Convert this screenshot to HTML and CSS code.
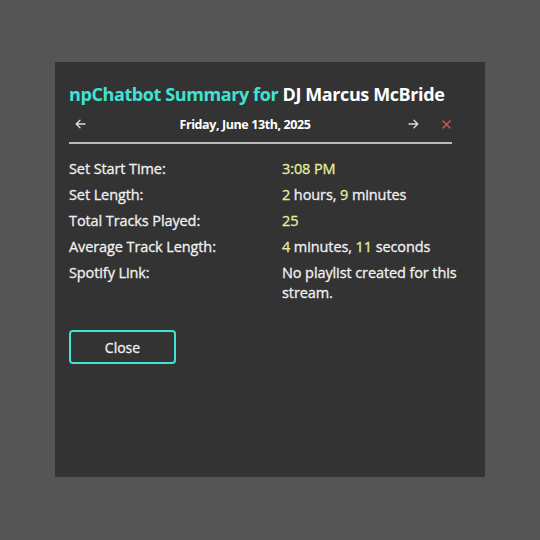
FILE: index.html
```html
<!DOCTYPE html>
<html>
<head>
<meta charset="utf-8">
<link rel="stylesheet" href="styles.css">
</head>
<body>
<div class="panel">
  <h1 class="title"><span class="brand">npChatbot Summary for</span> DJ Marcus McBride</h1>
  <div class="nav">
    <span class="navbtn"><svg width="11" height="10" viewBox="0 0 11 10"><path d="M10 5H1.5M5 1.2L1.2 5L5 8.8" fill="none" stroke="#dddddd" stroke-width="1.3" stroke-linecap="round" stroke-linejoin="round"/></svg></span>
    <span class="date">Friday, June 13th, 2025</span>
    <span class="navbtn"><svg width="11" height="10" viewBox="0 0 11 10"><path d="M1 5H9.5M6 1.2L9.8 5L6 8.8" fill="none" stroke="#dddddd" stroke-width="1.3" stroke-linecap="round" stroke-linejoin="round"/></svg></span>
    <span class="navbtn close-x"><svg width="9" height="9" viewBox="0 0 9 9"><path d="M1 1L8 8M8 1L1 8" fill="none" stroke="#e05555" stroke-width="1.4" stroke-linecap="round"/></svg></span>
  </div>
  <div class="rule"></div>
  <div class="stats">
    <div class="label">Set Start Time:</div>
    <div class="value"><span class="num">3:08 PM</span></div>
    <div class="label">Set Length:</div>
    <div class="value"><span class="num">2</span> hours, <span class="num">9</span> minutes</div>
    <div class="label">Total Tracks Played:</div>
    <div class="value"><span class="num">25</span></div>
    <div class="label">Average Track Length:</div>
    <div class="value"><span class="num">4</span> minutes, <span class="num">11</span> seconds</div>
    <div class="label">Spotify Link:</div>
    <div class="value">No playlist created for this stream.</div>
  </div>
  <button class="close-btn">Close</button>
</div>
</body>
</html>
```
FILE: styles.css
```css
html, body {
  margin: 0;
  padding: 0;
  background: #555555;
  width: 540px;
  height: 540px;
}
body {
  font-family: "Open Sans", "Noto Sans", sans-serif;
  color: #f0f0f0;
}
.panel {
  box-sizing: border-box;
  margin: 62px 0 0 55px;
  width: 430px;
  height: 415px;
  background: #333333;
  padding: 18px 33px 0 14px;
}
.title {
  margin: 0;
  font-size: 18px;
  font-weight: 700;
  line-height: 28px;
  color: #ffffff;
  letter-spacing: -0.4px;
  white-space: nowrap;
}
.brand {
  color: #40e3d3;
}
.nav {
  display: flex;
  align-items: center;
  height: 28px;
  margin-top: 2px;
  margin-right: -6px;
}
.navbtn {
  width: 23px;
  display: flex;
  justify-content: center;
  align-items: center;
}
.date {
  flex: 1;
  text-align: center;
  font-size: 12.5px;
  font-weight: 700;
  color: #ffffff;
  letter-spacing: -0.4px;
  padding-right: 4px;
}
.close-x {
  margin-left: 10px;
}
.rule {
  height: 2px;
  background: #bbbbbb;
  margin-top: 4px;
}
.stats {
  display: grid;
  grid-template-columns: 213px 1fr;
  margin-top: 12px;
  margin-right: -22px;
  font-size: 14.5px;
  letter-spacing: -0.1px;
  -webkit-text-stroke: 0.3px currentColor;
}
.stats .value,
.stats .label {
  line-height: 20px;
  padding-top: 3px;
  padding-bottom: 3px;
}
.num {
  color: #e3ee9c;
}
.close-btn {
  margin-top: 24px;
  width: 107px;
  height: 34px;
  background: transparent;
  border: 2px solid #40e3d3;
  border-radius: 4px;
  color: #f0f0f0;
  font-family: "Open Sans", "Noto Sans", sans-serif;
  font-size: 14px;
  -webkit-text-stroke: 0.3px currentColor;
}
```
